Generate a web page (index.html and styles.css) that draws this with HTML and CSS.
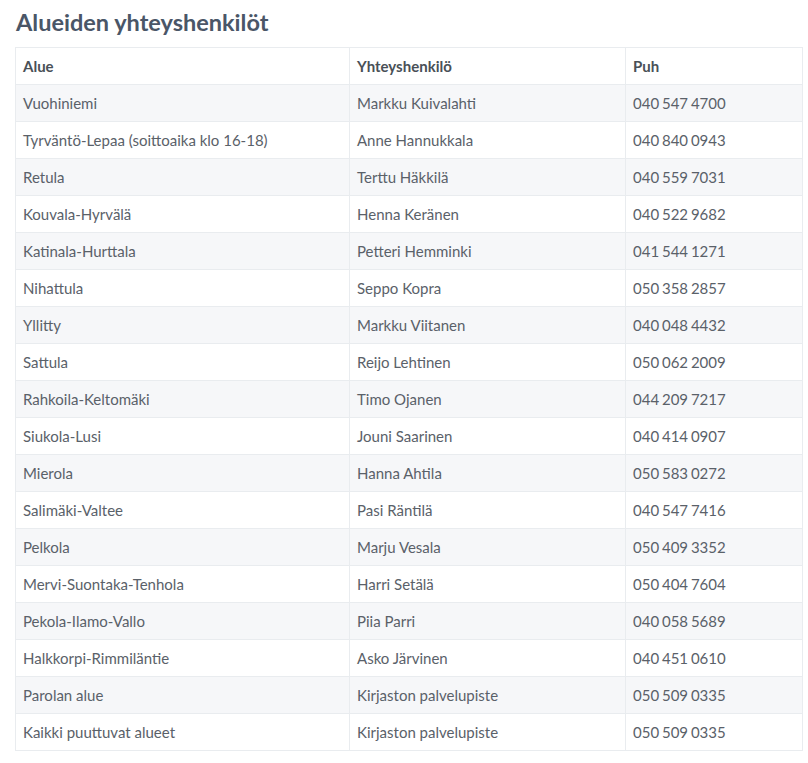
FILE: index.html
```html
<!DOCTYPE html>
<html lang="fi">
<head>
<meta charset="utf-8">
<link rel="stylesheet" href="styles.css">
</head>
<body>
<div class="page">
<h2 class="title">Alueiden yhteyshenkilöt</h2>
<table class="contacts">
<colgroup><col class="c1"><col class="c2"><col class="c3"></colgroup>
<thead><tr><th>Alue</th><th>Yhteyshenkilö</th><th>Puh</th></tr></thead>
<tbody>
<tr><td>Vuohiniemi</td><td>Markku Kuivalahti</td><td class="phone">040 547 4700</td></tr>
<tr><td>Tyrväntö-Lepaa (soittoaika klo 16-18)</td><td>Anne Hannukkala</td><td class="phone">040 840 0943</td></tr>
<tr><td>Retula</td><td>Terttu Häkkilä</td><td class="phone">040 559 7031</td></tr>
<tr><td>Kouvala-Hyrvälä</td><td>Henna Keränen</td><td class="phone">040 522 9682</td></tr>
<tr><td>Katinala-Hurttala</td><td>Petteri Hemminki</td><td class="phone">041 544 1271</td></tr>
<tr><td>Nihattula</td><td>Seppo Kopra</td><td class="phone">050 358 2857</td></tr>
<tr><td>Yllitty</td><td>Markku Viitanen</td><td class="phone">040 048 4432</td></tr>
<tr><td>Sattula</td><td>Reijo Lehtinen</td><td class="phone">050 062 2009</td></tr>
<tr><td>Rahkoila-Keltomäki</td><td>Timo Ojanen</td><td class="phone">044 209 7217</td></tr>
<tr><td>Siukola-Lusi</td><td>Jouni Saarinen</td><td class="phone">040 414 0907</td></tr>
<tr><td>Mierola</td><td>Hanna Ahtila</td><td class="phone">050 583 0272</td></tr>
<tr><td>Salimäki-Valtee</td><td>Pasi Räntilä</td><td class="phone">040 547 7416</td></tr>
<tr><td>Pelkola</td><td>Marju Vesala</td><td class="phone">050 409 3352</td></tr>
<tr><td>Mervi-Suontaka-Tenhola</td><td>Harri Setälä</td><td class="phone">050 404 7604</td></tr>
<tr><td>Pekola-Ilamo-Vallo</td><td>Piia Parri</td><td class="phone">040 058 5689</td></tr>
<tr><td>Halkkorpi-Rimmiläntie</td><td>Asko Järvinen</td><td class="phone">040 451 0610</td></tr>
<tr><td>Parolan alue</td><td>Kirjaston palvelupiste</td><td class="phone">050 509 0335</td></tr>
<tr><td>Kaikki puuttuvat alueet</td><td>Kirjaston palvelupiste</td><td class="phone">050 509 0335</td></tr>
</tbody>
</table>
</div>
</body>
</html>
```
FILE: styles.css
```css
html, body {
  margin: 0;
  padding: 0;
  background: #ffffff;
}
body {
  font-family: Lato, "Open Sans", sans-serif;
  color: #495057;
}
.page {
  padding: 8px 6px 0 15px;
}
.title {
  margin: 0 0 10px 1px;
  font-size: 23.5px;
  line-height: 29px;
  font-weight: 700;
  color: #4a5667;
}
.contacts {
  width: 787px;
  border-collapse: collapse;
  font-size: 15px;
  table-layout: fixed;
}
.c1 { width: 334px; }
.c2 { width: 276px; }
.c3 { width: 177px; }
.contacts th,
.contacts td {
  border: 1px solid #e9ecef;
  padding: 0 7px;
  height: 36px;
  text-align: left;
  vertical-align: middle;
  line-height: 20px;
}
.contacts th {
  font-weight: 700;
  color: #495057;
}
.contacts td {
  color: #5a6169;
}
.contacts td.phone {
  word-spacing: -1px;
}
.contacts tbody tr:nth-child(odd) td {
  background: #f6f7f9;
}
```
